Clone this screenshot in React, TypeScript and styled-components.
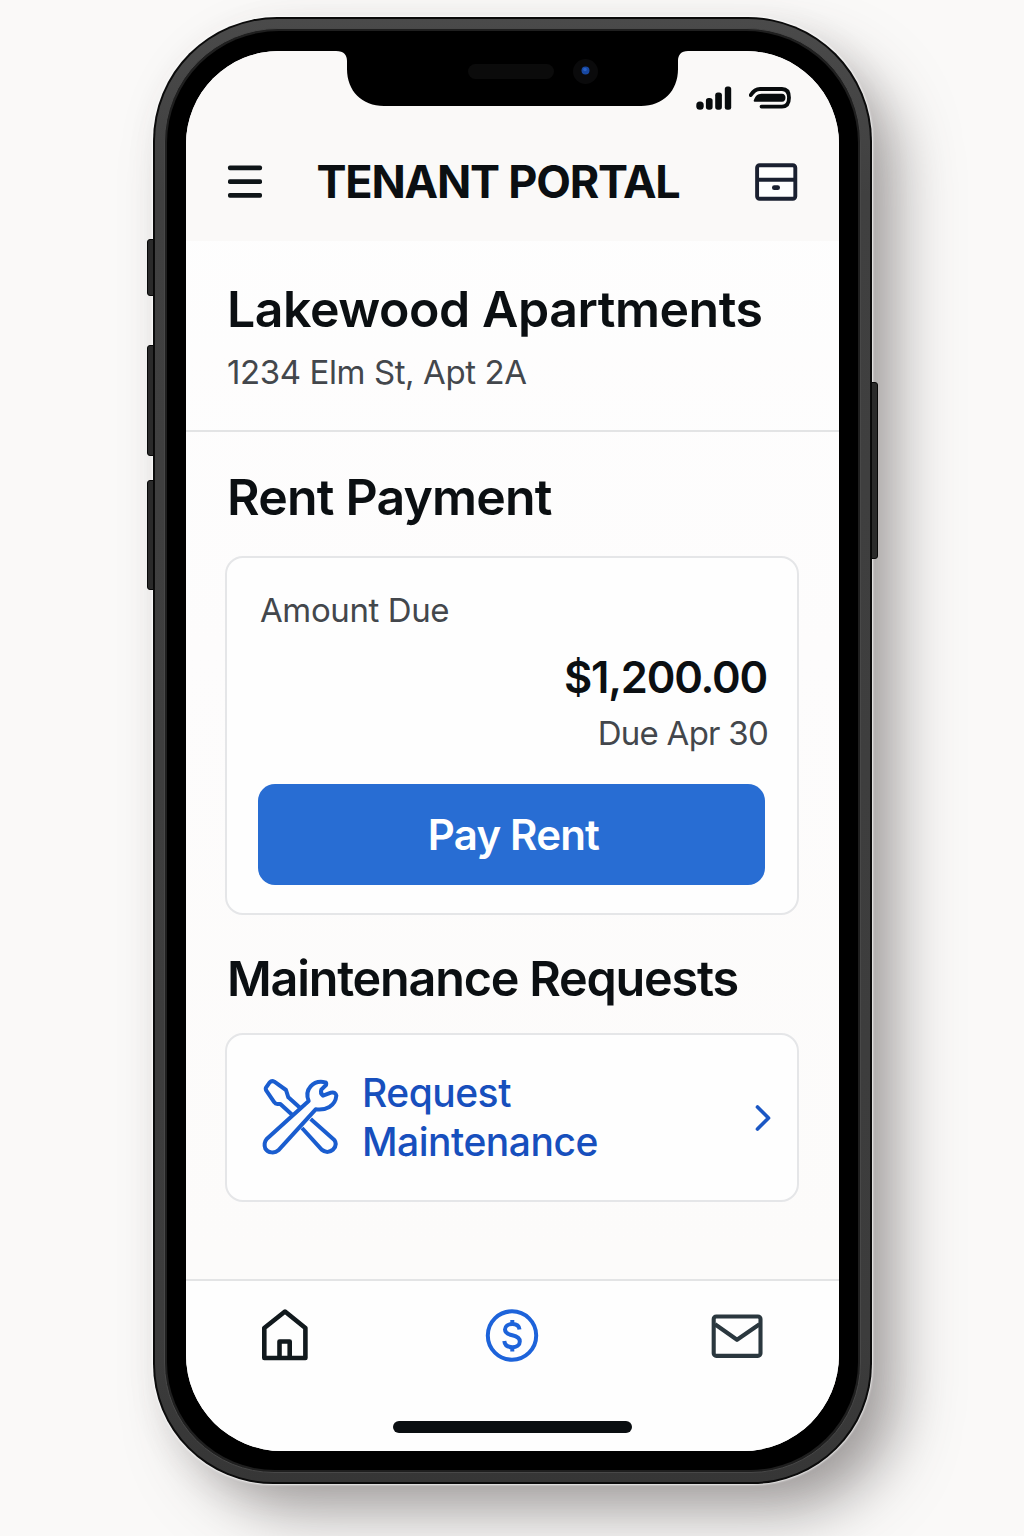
import React from "react";
import styled, { createGlobalStyle } from "styled-components";

const GlobalStyle = createGlobalStyle`
  * { box-sizing: border-box; }
  html, body { margin: 0; padding: 0; background: #faf9f8; }
  body { font-family: Inter, "Liberation Sans", sans-serif; color: #0b0f12; }
`;

const Page = styled.main`
  width: 1024px;
  height: 1536px;
  padding: 17px 0 0 153px;
  overflow: hidden;
  background: #faf9f8;
`;

const Phone = styled.div`
  position: relative;
  width: 719px;
  height: 1467px;
  padding: 2px;
  border-radius: 124px 124px 120px 120px;
  background: #0b0b0b;
  box-shadow: 0 0 2px 1px rgba(255, 255, 255, 0.8), 30px 32px 60px -6px rgba(76, 70, 70, 0.5),
    6px 10px 36px rgba(90, 80, 80, 0.08);
`;

const Rail = styled.div`
  height: 100%;
  padding: 9px;
  border-radius: 122px 122px 118px 118px;
  background: linear-gradient(180deg, #4a4a4a 0%, #404040 12%, #3c3c3c 90%, #363636 100%);
`;

const Bevel = styled.div`
  height: 100%;
  padding: 2px;
  border-radius: 114px 114px 110px 110px;
  background: #1f1f1f;
  border: 1px solid #484848;
`;

const Bezel = styled.div`
  height: 100%;
  padding: 20px 19px 19px;
  border-radius: 112px 112px 108px 108px;
  background: #000;
`;

const Screen = styled.div`
  position: relative;
  display: flex;
  flex-direction: column;
  width: 653px;
  height: 1400px;
  border-radius: 93px 93px 96px 96px;
  overflow: hidden;
  background: linear-gradient(180deg, #fefefe 0, #fdfcfc 600px, #fcfbfa 1200px);
`;

const SideButton = styled.span<{ $side: "left" | "right"; $top: number; $height: number }>`
  position: absolute;
  ${(p) => p.$side}: -6px;
  top: ${(p) => p.$top}px;
  width: 7px;
  height: ${(p) => p.$height}px;
  border: 1px solid #080808;
  border-radius: ${(p) => (p.$side === "left" ? "3px 0 0 3px" : "0 3px 3px 0")};
  background: #2a2a2a;
`;

const Notch = styled.svg`
  position: absolute;
  left: 150px;
  top: 0;
`;

const StatusBar = styled.div`
  display: flex;
  align-items: flex-start;
  justify-content: flex-end;
  gap: 17px;
  height: 71px;
  padding: 35px 47px 0 0;
  background: #faf9f8;
`;

const Header = styled.header`
  display: flex;
  align-items: center;
  justify-content: space-between;
  height: 119px;
  padding: 0 41px;
  background: #faf9f8;
`;

const Title = styled.h1`
  margin: 0 21px 0 0;
  font-size: 45px;
  line-height: 54px;
  font-weight: 650;
  letter-spacing: -1.2px;
  white-space: nowrap;
`;

const Property = styled.section`
  height: 191px;
  padding: 38px 41px 0;
  border-bottom: 2px solid #e3e4e5;
`;

const Heading = styled.h2<{ $spacing?: number; $size?: number }>`
  margin: 0;
  font-size: ${(p) => p.$size ?? 50}px;
  line-height: 60px;
  font-weight: 600;
  letter-spacing: ${(p) => p.$spacing ?? -0.8}px;
  white-space: nowrap;
`;

const Muted = styled.p<{ $spacing?: number }>`
  margin: 0;
  font-size: 33px;
  line-height: 44px;
  font-weight: 400;
  color: #43474c;
  letter-spacing: ${(p) => p.$spacing ?? -0.4}px;
  white-space: nowrap;
`;

const Address = styled(Muted)`
  margin-top: 11px;
`;

const Content = styled.section`
  display: flex;
  flex-direction: column;
  flex: 1;
  padding: 35px 40px 0 39px;
`;

const SectionHeading = styled(Heading)`
  padding-left: 2px;
`;

const Card = styled.div`
  border: 2px solid #e5e6e8;
  border-radius: 18px;
  background: #fefefe;
`;

const RentCard = styled(Card)`
  display: flex;
  flex-direction: column;
  height: 359px;
  margin: 29px 0 34px;
  padding: 30px 32px 0 31px;
`;

const AmountLabel = styled(Muted)`
  padding-left: 2px;
`;

const Due = styled.div`
  display: flex;
  flex-direction: column;
  align-items: flex-end;
  margin: 18px -2px 0 0;
`;

const Amount = styled.strong`
  font-size: 43.5px;
  line-height: 54px;
  font-weight: 600;
  letter-spacing: -1.2px;
`;

const DueDate = styled(Muted)`
  margin: 7px -1px 0 0;
`;

const PayButton = styled.button`
  height: 101px;
  margin-top: 29px;
  padding: 0 0 0 4px;
  border: 0;
  border-radius: 17px;
  background: #286dd3;
  color: #fff;
  font: 600 42px/50px Inter, "Liberation Sans", sans-serif;
  letter-spacing: -0.8px;
`;

const RequestCard = styled(Card)`
  display: flex;
  align-items: center;
  height: 169px;
  margin-top: 24px;
  padding: 0 24px 1px 34px;
`;

const RequestLabel = styled.a`
  flex: 1;
  padding-left: 23px;
  font-size: 39px;
  line-height: 49px;
  font-weight: 500;
  letter-spacing: -0.5px;
  color: #174fbd;
`;

const Nav = styled.nav`
  display: grid;
  grid-template-columns: 199px 254px 200px;
  height: 172px;
  padding-top: 28px;
  border-top: 2px solid #e3e4e5;
  background: #fefefe;
`;

const NavItem = styled.a<{ $nudge?: number }>`
  display: flex;
  justify-content: center;
  height: 54px;
  padding-right: ${(p) => p.$nudge ?? 0}px;
`;

const HomeIndicator = styled.span`
  position: absolute;
  left: 207px;
  bottom: 18px;
  width: 239px;
  height: 12px;
  border-radius: 6px;
  background: #0a0e11;
`;

const NotchDrawing = () => (
  <Notch width="352" height="56" viewBox="0 0 352 56">
    <path d="M0 -1H352V0C345 0 342 4 342 10V18C342 40 327 55 305 55H48C26 55 11 40 11 18V10C11 4 8 0 0 0Z" fill="#000" />
    <rect x="132" y="13" width="86" height="15" rx="7.5" fill="#0b0b0b" />
    <circle cx="249.500" cy="20.500" r="12.500" fill="#0a0a0b" />
    <circle cx="249.500" cy="19.500" r="4" fill="#1747a0" />
    <circle cx="249" cy="18.500" r="1.800" fill="#2860c4" />
  </Notch>
);

const SignalIcon = () => (
  <svg width="36" height="24" viewBox="0 0 36 24" fill="#070b0d">
    <rect x="0.300" y="15.500" width="7.400" height="8.300" rx="3.600" />
    <rect x="9.900" y="12" width="6.700" height="11.800" rx="2.800" />
    <rect x="19.200" y="6.500" width="6.700" height="17.300" rx="2.700" />
    <rect x="28.800" y="0.500" width="6.400" height="23.300" rx="2.500" />
  </svg>
);

const BatteryIcon = () => (
  <svg width="43" height="24" viewBox="0 0 43 24">
    <path d="M1.800 9.100C4 5.500 7 3 11 3H33C37.500 3 40 6.200 40 11.800S37.500 20.600 33 20.600H12.500" fill="none" stroke="#070b0d" strokeWidth="3.800" strokeLinecap="round" />
    <path d="M4.800 14.200C6 10.500 8.500 7.700 12.500 7.700H33C35.400 7.700 36.500 9.400 36.500 11.700S35.400 15.700 33 15.700H6C5 15.700 4.500 15.200 4.800 14.200Z" fill="#070b0d" />
  </svg>
);

const MenuIcon = () => (
  <svg width="36" height="34" viewBox="0 0 36 34" fill="#0f1518">
    <rect x="1" y="0.500" width="34" height="4.800" rx="1.800" />
    <rect x="1" y="14.300" width="34" height="4.800" rx="1.800" />
    <rect x="1" y="28" width="34" height="4.800" rx="1.800" />
  </svg>
);

const DrawerIcon = () => (
  <svg width="44" height="38" viewBox="0 0 44 38" fill="none" stroke="#1a2030" strokeWidth="3.900">
    <rect x="3.100" y="2.200" width="38.200" height="33.600" rx="2.500" fill="#fefefe" />
    <path d="M3 16.800H41" />
    <rect x="18" y="22.300" width="8" height="4.800" rx="2.300" fill="#1a2030" stroke="none" />
  </svg>
);

const ToolsIcon = () => (
  <svg width="78" height="78" viewBox="63 53 234 234" fill="none" stroke="#1a5dcf" strokeWidth="12" strokeLinejoin="round">
    <path d="M184 146L145 111L138 89L103 64Q95 60 89 66L78 82Q76 86 79 91L103 126Q106 131 112 131L121 131L158 165" />
    <path d="M186 203L245 268Q262 282 279 268Q293 253 283 239L212 176" />
    <path d="M206 122C192 87 219 58 256 66Q260 68 258 74L244 88Q240 99 249 106L273 97Q287 94 289 106C286 138 257 151 227 147L115 270C104 280 84 278 76 265Q70 248 80 236Z" />
  </svg>
);

const ChevronIcon = () => (
  <svg width="20" height="30" viewBox="0 0 20 30">
    <path d="M4.500 5L15.500 16L4.500 27" fill="none" stroke="#1b57c4" strokeWidth="3.700" strokeLinecap="round" strokeLinejoin="round" />
  </svg>
);

const HomeIcon = () => (
  <svg width="48" height="54" viewBox="0 0 48 54" fill="none" stroke="#11191d" strokeWidth="4.600" strokeLinejoin="round">
    <path d="M3.300 19L24 2.500L44.400 19V49H3.300Z" />
    <path d="M18.500 49V32.500H28.700V49" />
  </svg>
);

const DollarIcon = () => (
  <svg width="54" height="54" viewBox="0 0 54 54" fill="none" stroke="#1d63da" strokeLinecap="butt">
    <circle cx="27" cy="26.500" r="24.200" strokeWidth="4" />
    <path d="M34.500 20.500C34.100 16.800 31.300 15 27.300 15C23 15 20 17.200 20 20.500C20 24 22.500 25.200 27.300 26.300C32.200 27.400 34.800 28.800 34.800 32.400C34.800 36 31.700 38.200 27.300 38.200C22.700 38.200 19.700 36 19.300 32" strokeWidth="4" />
    <path d="M27.300 11V16M27.300 37V42.500" strokeWidth="4" />
  </svg>
);

const MailIcon = () => (
  <svg width="52" height="54" viewBox="0 0 52 54" fill="none" stroke="#2a373e" strokeWidth="4.100" strokeLinejoin="round">
    <rect x="2.700" y="7.500" width="46.800" height="39.400" rx="2.600" />
    <path d="M4 15.300L26 30.800L48.500 15.300" />
  </svg>
);

export default function App() {
  return (
    <>
      <GlobalStyle />
      <Page>
        <Phone>
          <SideButton $side="left" $top={222} $height={57} />
          <SideButton $side="left" $top={328} $height={111} />
          <SideButton $side="left" $top={463} $height={110} />
          <SideButton $side="right" $top={365} $height={177} />
          <Rail>
            <Bevel>
              <Bezel>
                <Screen>
                  <NotchDrawing />
                  <StatusBar>
                    <SignalIcon />
                    <BatteryIcon />
                  </StatusBar>
                  <Header>
                    <MenuIcon />
                    <Title>TENANT PORTAL</Title>
                    <DrawerIcon />
                  </Header>
                  <Property>
                    <Heading $spacing={-0.45}>Lakewood Apartments</Heading>
                    <Address>1234 Elm St, Apt 2A</Address>
                  </Property>
                  <Content>
                    <SectionHeading>Rent Payment</SectionHeading>
                    <RentCard>
                      <AmountLabel>Amount Due</AmountLabel>
                      <Due>
                        <Amount>$1,200.00</Amount>
                        <DueDate $spacing={-0.75}>Due Apr 30</DueDate>
                      </Due>
                      <PayButton>Pay Rent</PayButton>
                    </RentCard>
                    <SectionHeading $size={48.5} $spacing={-1.2}>Maintenance Requests</SectionHeading>
                    <RequestCard>
                      <ToolsIcon />
                      <RequestLabel>
                        Request
                        <br />
                        Maintenance
                      </RequestLabel>
                      <ChevronIcon />
                    </RequestCard>
                  </Content>
                  <Nav>
                    <NavItem $nudge={1}><HomeIcon /></NavItem>
                    <NavItem $nudge={1}><DollarIcon /></NavItem>
                    <NavItem $nudge={5}><MailIcon /></NavItem>
                  </Nav>
                  <HomeIndicator />
                </Screen>
              </Bezel>
            </Bevel>
          </Rail>
        </Phone>
      </Page>
    </>
  );
}
